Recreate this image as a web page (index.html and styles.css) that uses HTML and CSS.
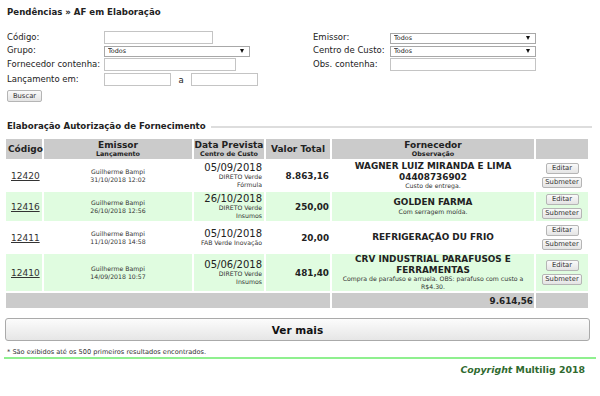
FILE: index.html
```html
<!DOCTYPE html>
<html>

<head>
    <meta charset="utf-8" />
    <title>AF em Elaboração</title>
    <link rel="stylesheet" href="styles.css">
</head>

<body>
    <h1 class="titulo">Pendências » AF em Elaboração</h1>

    <!-- filtros -->
    <form class="filtro" onsubmit="return false">
        <label>Código:</label>
        <div><input type="text" class="w109"></div>
        <label>Emissor:</label>
        <div><span class="sel"><select><option>Todos</option></select></span></div>

        <label>Grupo:</label>
        <div><span class="sel"><select><option>Todos</option></select></span></div>
        <label>Centro de Custo:</label>
        <div><span class="sel"><select><option>Todos</option></select></span></div>

        <label>Fornecedor contenha:</label>
        <div><input type="text" class="w132"></div>
        <label>Obs. contenha:</label>
        <div><input type="text" class="w146"></div>

        <label>Lançamento em:</label>
        <div class="periodo"><input type="text" class="w67"><span>a</span><input type="text" class="w67"></div>
    </form>
    <button class="btn buscar">Buscar</button>

    <h2 class="secao">Elaboração Autorização de Fornecimento</h2>

    <table class="lista">
        <colgroup>
            <col style="width:36px">
            <col style="width:148px">
            <col style="width:70px">
            <col style="width:64px">
            <col style="width:202px">
            <col style="width:52px">
        </colgroup>
        <thead>
            <tr>
                <th>Código</th>
                <th>Emissor<small>Lançamento</small></th>
                <th>Data Prevista<small>Centro de Custo</small></th>
                <th>Valor Total</th>
                <th>Fornecedor<small>Observação</small></th>
                <th></th>
            </tr>
        </thead>
        <tbody>
            <tr>
                <td class="cod"><a href="#">12420</a></td>
                <td class="emissor">Guilherme Bampi<br>31/10/2018 12:02</td>
                <td class="data">05/09/2018<small>DIRETO Verde<br>Fórmula</small></td>
                <td class="valor">8.863,16</td>
                <td class="forn">WAGNER LUIZ MIRANDA E LIMA 04408736902<small>Custo de entrega.</small></td>
                <td class="acoes"><button class="btn editar">Editar</button><button class="btn">Submeter</button></td>
            </tr>
            <tr class="verde">
                <td class="cod"><a href="#">12416</a></td>
                <td class="emissor">Guilherme Bampi<br>26/10/2018 12:56</td>
                <td class="data">26/10/2018<small>DIRETO Verde<br>Insumos</small></td>
                <td class="valor">250,00</td>
                <td class="forn">GOLDEN FARMA<small>Com serragem moída.</small></td>
                <td class="acoes"><button class="btn editar">Editar</button><button class="btn">Submeter</button></td>
            </tr>
            <tr>
                <td class="cod"><a href="#">12411</a></td>
                <td class="emissor">Guilherme Bampi<br>11/10/2018 14:58</td>
                <td class="data">05/10/2018<small>FAB Verde Inovação</small></td>
                <td class="valor">20,00</td>
                <td class="forn">REFRIGERAÇÃO DU FRIO</td>
                <td class="acoes"><button class="btn editar">Editar</button><button class="btn">Submeter</button></td>
            </tr>
            <tr class="verde">
                <td class="cod"><a href="#">12410</a></td>
                <td class="emissor">Guilherme Bampi<br>14/09/2018 10:57</td>
                <td class="data">05/06/2018<small>DIRETO Verde<br>Insumos</small></td>
                <td class="valor">481,40</td>
                <td class="forn">CRV INDUSTRIAL PARAFUSOS E FERRAMENTAS<small>Compra de parafuso e arruela. OBS: parafuso com custo a R$4.30.</small></td>
                <td class="acoes"><button class="btn editar">Editar</button><button class="btn">Submeter</button></td>
            </tr>
        </tbody>
        <tfoot>
            <tr>
                <td colspan="4"></td>
                <td class="total">9.614,56</td>
                <td></td>
            </tr>
        </tfoot>
    </table>

    <button class="ver_mais">Ver mais</button>
    <p class="nota">* São exibidos até os 500 primeiros resultados encontrados.</p>

    <div class="rodape"><em>Copyright</em> Multilig 2018</div>
</body>

</html>
```

FILE: styles.css
```css
* {
    margin: 0;
    padding: 0;
    box-sizing: border-box;
}

body {
    font-family: "DejaVu Sans", Verdana, sans-serif;
    font-size: 8.5px;
    color: #222;
    background: #fff;
    padding: 6px 6px 0 6px;
}

.titulo {
    font-size: 8.6px;
    font-weight: bold;
    line-height: 12px;
    margin-left: 1px;
}

/* filtros */
.filtro {
    display: grid;
    grid-template-columns: 97px 209px 77px 1fr;
    grid-template-rows: 13px 13px 14px 16px;
    align-items: center;
    margin-top: 13px;
    padding-left: 1px;
}

.filtro label {
    white-space: nowrap;
    line-height: 11px;
}

.filtro div {
    display: flex;
    align-items: center;
}

.filtro input {
    height: 13px;
    border: 1px solid #c4c4c4;
    background: #fff;
}

.w109 { width: 109px; }
.w132 { width: 132px; }
.w146 { width: 146px; }
.w67 { width: 67px; }

.periodo span {
    width: 20px;
    text-align: center;
    padding-top: 1px;
}

.sel {
    position: relative;
    display: block;
    width: 146px;
    height: 11px;
}

.sel select {
    -webkit-appearance: none;
    appearance: none;
    width: 100%;
    height: 11px;
    border: 1px solid #a8a8a8;
    background: #fff;
    font-family: "DejaVu Sans", Verdana, sans-serif;
    font-size: 6.4px;
    line-height: 9px;
    padding: 0 3px;
    color: #222;
}

.sel::after {
    content: "";
    position: absolute;
    right: 6px;
    top: 4px;
    border-left: 2.5px solid transparent;
    border-right: 2.5px solid transparent;
    border-top: 4px solid #111;
}

.btn {
    display: block;
    font-family: "DejaVu Sans", Verdana, sans-serif;
    font-size: 6.8px;
    color: #333;
    height: 11px;
    line-height: 9px;
    padding: 0 2px;
    border: 1px solid #b5b5b5;
    border-radius: 2px;
    background: linear-gradient(#fafafa, #e4e4e4);
}

.btn.editar {
    width: 33px;
}

.buscar {
    margin: 3px 0 0 1px;
    height: 12px;
    width: 35px;
    padding: 0;
}

/* secao */
.secao {
    display: flex;
    align-items: center;
    font-size: 8.6px;
    font-weight: bold;
    line-height: 12px;
    margin: 18px 0 5px 1px;
    white-space: nowrap;
}

.secao::after {
    content: "";
    flex: 1;
    height: 2px;
    background: #ddd;
    margin: 1px 2px 0 5px;
}

/* tabela */
.lista {
    table-layout: fixed;
    width: 586px;
    margin-left: -2px;
    border-spacing: 2px;
}

.lista th {
    background: #cbcbcb;
    height: 20px;
    font-size: 9px;
    line-height: 10px;
    text-align: center;
    vertical-align: middle;
    padding: 0;
}

.lista th:first-child {
    text-align: left;
    padding-left: 2px;
}

.lista th small {
    display: block;
    font-size: 6.4px;
    line-height: 8px;
}

.lista td {
    vertical-align: middle;
    padding: 0;
}

.lista tr.verde td {
    background: #e0fce0;
}

.cod {
    padding-left: 5px !important;
    font-size: 9px;
}

.cod a {
    color: #333;
}

.emissor {
    text-align: center;
    font-size: 6.2px;
    line-height: 7.5px;
    color: #333;
}

.data {
    text-align: right;
    font-size: 10px;
    line-height: 11px;
    padding-right: 2px !important;
}

.data small {
    display: block;
    font-size: 6.2px;
    line-height: 8px;
    color: #333;
}

.valor {
    text-align: right;
    font-weight: bold;
    font-size: 8.8px;
    padding-right: 1px !important;
}

.forn {
    text-align: center;
    font-weight: bold;
    font-size: 8.9px;
    line-height: 10.5px;
    padding: 0 4px !important;
}

.forn small {
    display: block;
    font-weight: normal;
    font-size: 6.2px;
    line-height: 8px;
    color: #333;
}

.acoes .btn {
    margin: 2px auto;
}

.acoes .btn + .btn {
    margin-top: 3px;
}

.lista tfoot td {
    background: #cbcbcb;
    height: 15px;
}

.lista td.total {
    text-align: right;
    font-weight: bold;
    font-size: 8.8px;
    padding-right: 1px;
}

.ver_mais {
    display: block;
    width: 585px;
    height: 23px;
    margin: 8px 0 0 -1px;
    font-family: "DejaVu Sans", Verdana, sans-serif;
    font-size: 10.5px;
    font-weight: bold;
    color: #111;
    border: 1px solid #aaa;
    border-radius: 3px;
    background: linear-gradient(#fcfcfc, #e6e6e6);
}

.nota {
    font-size: 6.6px;
    line-height: 8px;
    margin: 7px 0 0 1px;
    color: #333;
}

.rodape {
    margin: 1px -2px 0 -2px;
    border-top: 2px solid #8ff08f;
    text-align: right;
    padding: 5px 11px 0 0;
    font-size: 9.4px;
    line-height: 12px;
    font-weight: bold;
    color: #2f6a2f;
}
```
